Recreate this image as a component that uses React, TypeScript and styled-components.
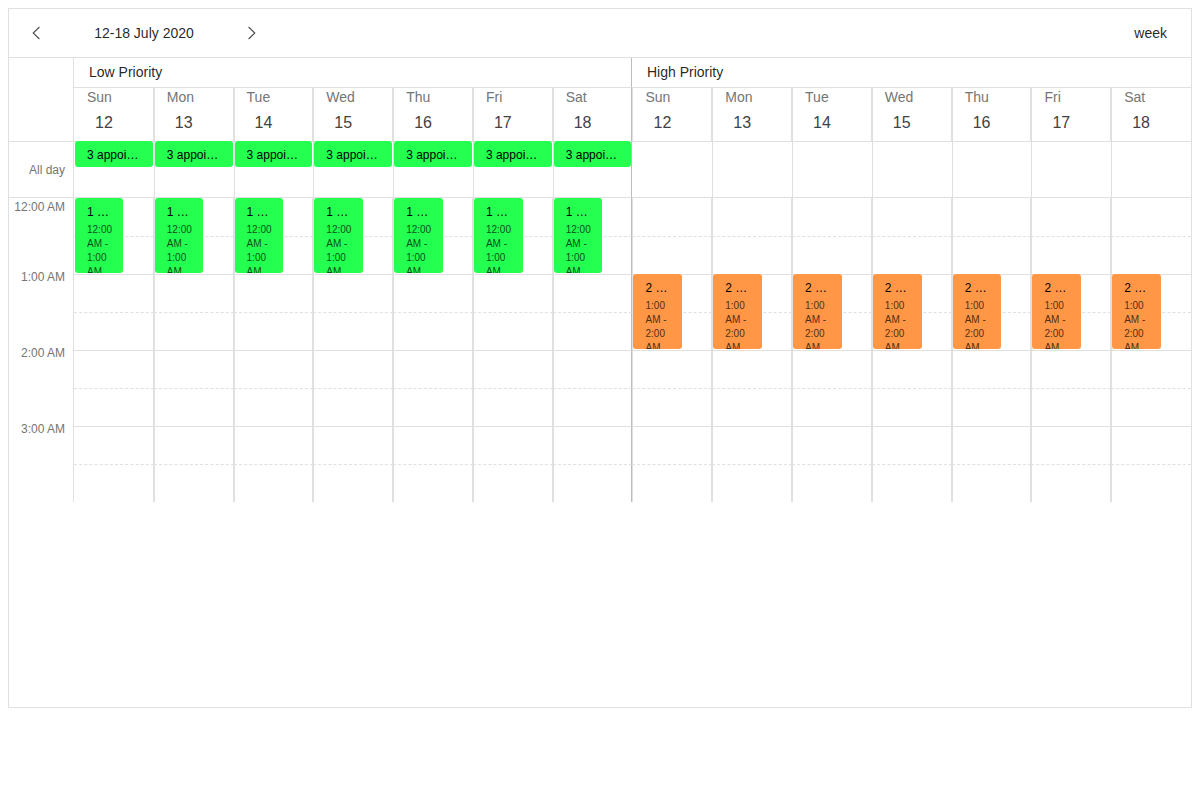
import React from 'react';
import styled, { createGlobalStyle } from 'styled-components';

const line = '#e0e0e0';
const groupLine = '#bdbdbd';

const GlobalStyle = createGlobalStyle`
  *, *::before, *::after { box-sizing: border-box; }
  body {
    margin: 8px;
    background: #fff;
    font-family: "Liberation Sans", Arial, sans-serif;
    font-size: 14px;
    color: rgba(0, 0, 0, 0.87);
  }
  button { font: inherit; color: inherit; background: none; border: 0; padding: 0; cursor: pointer; }
`;

const Scheduler = styled.div`
  border: 1px solid ${line};
  min-height: 700px;
`;

const Toolbar = styled.header`
  display: flex;
  align-items: center;
  justify-content: space-between;
  height: 49px;
  padding: 0 8px 0 9px;
  border-bottom: 1px solid ${line};
`;

const Navigator = styled.div`
  display: flex;
  align-items: center;
`;

const IconButton = styled.button`
  display: flex;
  align-items: center;
  justify-content: center;
  width: 36px;
  height: 36px;
`;

const DateButton = styled.button`
  width: 180px;
  height: 36px;
`;

const ViewButton = styled.button`
  height: 36px;
  padding: 0 16px;
`;

const Table = styled.table`
  display: block;
`;

const Head = styled.thead`
  display: block;
`;

const Body = styled.tbody`
  display: block;
`;

const Row = styled.tr`
  display: grid;
  grid-template-columns: 65px repeat(14, minmax(0, 1fr));
`;

const GroupRow = styled.tr`
  display: grid;
  grid-template-columns: 65px minmax(0, 558fr) minmax(0, 559fr);
`;

const SideHead = styled.th<{ $underline?: boolean }>`
  display: flex;
  justify-content: flex-end;
  padding: 0 8px 0 0;
  border-right: 1px solid ${line};
  border-bottom: ${p => (p.$underline ? `1px solid ${line}` : '0')};
  font-size: 12px;
  font-weight: 400;
  line-height: 16px;
  white-space: nowrap;
  color: #757575;
`;

const AllDayLabel = styled.span`
  align-self: center;
`;

const HourLabel = styled.span<{ $raised: boolean }>`
  height: 16px;
  margin-top: ${p => (p.$raised ? '-6px' : '1px')};
`;

const GroupHead = styled.th<{ $divider: boolean }>`
  display: block;
  padding: 6px 15px;
  border-bottom: 1px solid ${line};
  border-right: ${p => (p.$divider ? `1px solid ${groupLine}` : '0')};
  font-weight: 400;
  line-height: 17px;
  text-align: left;
`;

type Edges = { $first: boolean; $groupEnd: boolean; $last: boolean };

const rightEdge = (p: Edges) =>
  p.$last ? '0' : `1px solid ${p.$groupEnd ? groupLine : line}`;

const DayHead = styled.th<Edges>`
  display: flex;
  flex-direction: column;
  height: 54px;
  padding: 1px 0 0 ${p => (p.$first ? '13px' : '12px')};
  border-left: ${p => (p.$first ? '0' : `1px solid ${line}`)};
  border-right: ${rightEdge};
  border-bottom: 1px solid ${line};
  font-weight: 400;
  text-align: left;
`;

const DayName = styled.span`
  line-height: 16px;
  color: #757575;
`;

const DayNumber = styled.span`
  padding: 8px 0 0 8px;
  font-size: 16px;
  line-height: 20px;
  color: #424242;
`;

const AllDayCell = styled.td<Edges & { $groupStart: boolean }>`
  display: block;
  height: 56px;
  padding: 0 ${p => (p.$groupEnd ? '0' : '1px')} 0 ${p => (p.$first ? '1px' : '0')};
  border-left: ${p => (p.$groupStart ? '0' : `1px solid ${line}`)};
  border-right: ${p => (p.$groupEnd ? `1px solid ${groupLine}` : '0')};
  border-bottom: 1px solid ${line};
`;

const TimeCell = styled.td<Edges & { $bottom: 'solid' | 'dashed' | 'none'; $top: boolean }>`
  display: block;
  position: relative;
  height: ${p => (p.$top ? '39px' : p.$bottom === 'none' ? '37px' : '38px')};
  padding: 0;
  border-left: ${p => (p.$first ? '0' : `1px solid ${line}`)};
  border-right: ${rightEdge};
  border-bottom: 1px ${p => p.$bottom} ${line};
`;

const Appointment = styled.button<{ $color: string }>`
  display: block;
  overflow: hidden;
  border-radius: 3px;
  background: ${p => p.$color};
  color: #000;
  text-align: left;
`;

const AllDayAppointment = styled(Appointment)`
  width: 100%;
  height: 26px;
  margin-top: -1px;
  padding: 2px 12px 0;
`;

const TimedAppointment = styled(Appointment)<{ $first: boolean; $top: boolean }>`
  position: absolute;
  z-index: 1;
  top: ${p => (p.$top ? '0' : '-1px')};
  left: ${p => (p.$first ? '1px' : '0')};
  display: flex;
  flex-direction: column;
  justify-content: flex-start;
  width: ${p => (p.$first ? 'calc(60% + 1px)' : 'calc(60% + 2px)')};
  height: 75px;
  padding: 6px 12px 0;
`;

const Subject = styled.span`
  display: block;
  flex: none;
  overflow: hidden;
  text-overflow: ellipsis;
  white-space: nowrap;
  font-size: 12px;
  line-height: 16px;
`;

const Period = styled.span`
  display: block;
  flex: none;
  padding-top: 3px;
  font-size: 10px;
  line-height: 14px;
  opacity: 0.7;
`;

const days = ['Sun', 'Mon', 'Tue', 'Wed', 'Thu', 'Fri', 'Sat'];
const groups = ['Low Priority', 'High Priority'];
const hours = ['12:00 AM', '1:00 AM', '2:00 AM', '3:00 AM'];
const columns = groups.flatMap((_, group) => days.map((name, day) => ({ name, date: 12 + day, group, day })));

const edges = (i: number): Edges => ({ $first: i === 0, $groupEnd: i === 6, $last: i === 13 });

const timed = [
  { group: 0, slot: 0, color: '#24ff50', subject: '1 appointment', period: '12:00 AM - 1:00 AM' },
  { group: 1, slot: 2, color: '#ff9747', subject: '2 appointment', period: '1:00 AM - 2:00 AM' },
];

function Chevron({ points }: { points: string }) {
  return (
    <svg width="18" height="18" viewBox="0 0 18 18" fill="none" stroke="#4a4a4a" strokeWidth="1.1" aria-hidden="true">
      <polyline points={points} />
    </svg>
  );
}

export default function App() {
  return (
    <>
      <GlobalStyle />
      <Scheduler>
        <Toolbar>
          <Navigator>
            <IconButton aria-label="Previous period"><Chevron points="12.4,3 6.2,9 12.4,15" /></IconButton>
            <DateButton>12-18 July 2020</DateButton>
            <IconButton aria-label="Next period"><Chevron points="5.6,3 11.8,9 5.6,15" /></IconButton>
          </Navigator>
          <ViewButton>week</ViewButton>
        </Toolbar>
        <Table>
          <Head>
            <GroupRow>
              <SideHead as="td" />
              {groups.map((g, i) => <GroupHead key={g} colSpan={7} $divider={i === 0}>{g}</GroupHead>)}
            </GroupRow>
            <Row>
              <SideHead as="td" $underline />
              {columns.map((c, i) => (
                <DayHead key={i} {...edges(i)}>
                  <DayName>{c.name}</DayName>
                  <DayNumber>{c.date}</DayNumber>
                </DayHead>
              ))}
            </Row>
          </Head>
          <Body>
            <Row>
              <SideHead $underline><AllDayLabel>All day</AllDayLabel></SideHead>
              {columns.map((c, i) => (
                <AllDayCell key={i} {...edges(i)} $groupStart={c.day === 0}>
                  {c.group === 0 && (
                    <AllDayAppointment $color="#24ff50"><Subject>3 appointment</Subject></AllDayAppointment>
                  )}
                </AllDayCell>
              ))}
            </Row>
            {Array.from({ length: hours.length * 2 }, (_, slot) => (
              <Row key={slot}>
                {slot % 2 === 0
                  ? <SideHead><HourLabel $raised={slot > 0}>{hours[slot / 2]}</HourLabel></SideHead>
                  : <SideHead as="td" />}
                {columns.map((c, i) => (
                  <TimeCell
                    key={i}
                    {...edges(i)}
                    $top={slot === 0}
                    $bottom={slot % 2 === 0 ? 'dashed' : slot === 7 ? 'none' : 'solid'}
                  >
                    {timed.filter(t => t.group === c.group && t.slot === slot).map(t => (
                      <TimedAppointment key={t.subject} $color={t.color} $first={i === 0} $top={slot === 0}>
                        <Subject>{t.subject}</Subject>
                        <Period>{t.period}</Period>
                      </TimedAppointment>
                    ))}
                  </TimeCell>
                ))}
              </Row>
            ))}
          </Body>
        </Table>
      </Scheduler>
    </>
  );
}
